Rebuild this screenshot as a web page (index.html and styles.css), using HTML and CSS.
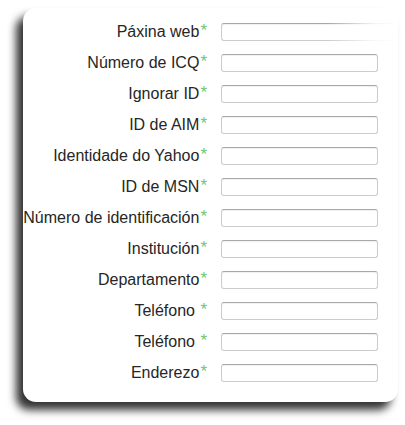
FILE: index.html
```html
<!DOCTYPE html>
<html lang="gl">
<head>
<meta charset="utf-8">
<link rel="stylesheet" href="styles.css">
</head>
<body>
<div class="card">
  <form class="form">
    <label class="lbl">Páxina web<span class="req">*</span></label><input class="field field-first" type="text">
    <label class="lbl">Número de ICQ<span class="req">*</span></label><input class="field" type="text">
    <label class="lbl">Ignorar ID<span class="req">*</span></label><input class="field" type="text">
    <label class="lbl">ID de AIM<span class="req">*</span></label><input class="field" type="text">
    <label class="lbl">Identidade do Yahoo<span class="req">*</span></label><input class="field" type="text">
    <label class="lbl">ID de MSN<span class="req">*</span></label><input class="field" type="text">
    <label class="lbl">Número de identificación<span class="req">*</span></label><input class="field" type="text">
    <label class="lbl">Institución<span class="req">*</span></label><input class="field" type="text">
    <label class="lbl">Departamento<span class="req">*</span></label><input class="field" type="text">
    <label class="lbl">Teléfono <span class="req">*</span></label><input class="field" type="text">
    <label class="lbl">Teléfono <span class="req">*</span></label><input class="field" type="text">
    <label class="lbl">Enderezo<span class="req">*</span></label><input class="field" type="text">
  </form>
  <div class="fade"></div>
</div>
</body>
</html>
```
FILE: styles.css
```css
html, body {
  margin: 0;
  padding: 0;
  background: #ffffff;
}
body {
  width: 405px;
  height: 425px;
  overflow: hidden;
  font-family: "Liberation Sans", Arial, sans-serif;
}
.card {
  position: relative;
  margin: 8px 0 0 23px;
  width: 375px;
  height: 394px;
  box-sizing: border-box;
  background: #fff;
  border-radius: 13px;
  overflow: hidden;
  box-shadow: -7px 8px 9px rgba(0, 0, 0, 0.8);
}
.form {
  display: grid;
  grid-template-columns: 184px 157px;
  column-gap: 14px;
  row-gap: 13px;
  padding-top: 15px;
}
.lbl {
  justify-self: end;
  display: block;
  text-align: right;
  height: 18px;
  line-height: 18px;
  font-size: 16px;
  color: #262626;
  white-space: pre;
}
.req {
  color: #74c474;
  font-size: 17px;
  margin-left: 1px;
  position: relative;
  top: -1px;
}
.field {
  box-sizing: border-box;
  width: 157px;
  height: 18px;
  margin: 0;
  padding: 0;
  border: 1px solid #cccccc;
  border-top-color: #a8a8a8;
  border-radius: 3px;
  background: #fff;
  box-shadow: inset 0 1px 1px rgba(0, 0, 0, 0.06);
}
.field-first {
  width: 175px;
  border-right-color: transparent;
}
.fade {
  position: absolute;
  top: 0;
  right: 0;
  width: 70px;
  height: 42px;
  background: linear-gradient(to left, #fff 0%, rgba(255,255,255,0.85) 35%, rgba(255,255,255,0) 100%);
  pointer-events: none;
}
```
